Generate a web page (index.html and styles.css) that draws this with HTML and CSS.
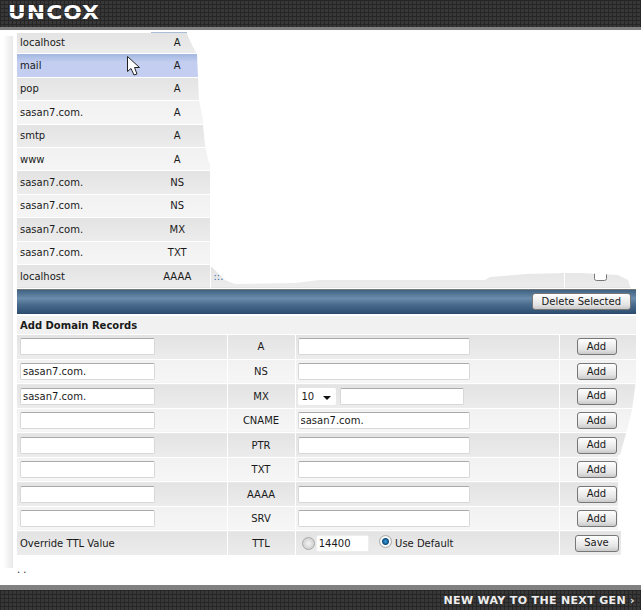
FILE: index.html

```html
<!DOCTYPE html>
<html lang="en">
<head>
  <meta charset="UTF-8" />
  <title>Uncox DNS Zone</title>
  <link rel="stylesheet" href="styles.css">
</head>
<body>
  <header class="top-bar">
    <span class="logo">UNCOX</span>
  </header>

  <main class="content">
    <table class="records">
      <tr class="shade"><td class="name">localhost</td><td class="type">A</td><td class="rest"></td><td class="check"></td></tr>
      <tr class="hover"><td class="name">mail</td><td class="type">A</td><td class="rest"></td><td class="check"></td></tr>
      <tr class="shade"><td class="name">pop</td><td class="type">A</td><td class="rest"></td><td class="check"></td></tr>
      <tr><td class="name">sasan7.com.</td><td class="type">A</td><td class="rest"></td><td class="check"></td></tr>
      <tr class="shade"><td class="name">smtp</td><td class="type">A</td><td class="rest"></td><td class="check"></td></tr>
      <tr><td class="name">www</td><td class="type">A</td><td class="rest"></td><td class="check"></td></tr>
      <tr class="shade"><td class="name">sasan7.com.</td><td class="type">NS</td><td class="rest"></td><td class="check"></td></tr>
      <tr><td class="name">sasan7.com.</td><td class="type">NS</td><td class="rest"></td><td class="check"></td></tr>
      <tr class="shade"><td class="name">sasan7.com.</td><td class="type">MX</td><td class="rest"></td><td class="check"></td></tr>
      <tr><td class="name">sasan7.com.</td><td class="type">TXT</td><td class="rest"></td><td class="check"></td></tr>
      <tr class="shade"><td class="name">localhost</td><td class="type">AAAA</td><td class="rest">::.</td><td class="check"><input type="checkbox"></td></tr>
    </table>

    <div class="action-bar">
      <button class="btn">Delete Selected</button>
    </div>

    <div class="add-title">Add Domain Records</div>
    <table class="add-form">
      <tr class="shade">
        <td class="c-host"><input class="field" type="text"></td>
        <td class="c-type">A</td>
        <td class="c-value"><input class="field wide" type="text"></td>
        <td class="c-btn"><button class="btn">Add</button></td>
      </tr>
      <tr>
        <td class="c-host"><input class="field" type="text" value="sasan7.com."></td>
        <td class="c-type">NS</td>
        <td class="c-value"><input class="field wide" type="text"></td>
        <td class="c-btn"><button class="btn">Add</button></td>
      </tr>
      <tr class="shade">
        <td class="c-host"><input class="field" type="text" value="sasan7.com."></td>
        <td class="c-type">MX</td>
        <td class="c-value">
          <span class="select">10<i class="arrow"></i></span>
          <input class="field prio" type="text">
        </td>
        <td class="c-btn"><button class="btn">Add</button></td>
      </tr>
      <tr>
        <td class="c-host"><input class="field" type="text"></td>
        <td class="c-type">CNAME</td>
        <td class="c-value"><input class="field wide" type="text" value="sasan7.com."></td>
        <td class="c-btn"><button class="btn">Add</button></td>
      </tr>
      <tr class="shade">
        <td class="c-host"><input class="field" type="text"></td>
        <td class="c-type">PTR</td>
        <td class="c-value"><input class="field wide" type="text"></td>
        <td class="c-btn"><button class="btn">Add</button></td>
      </tr>
      <tr>
        <td class="c-host"><input class="field" type="text"></td>
        <td class="c-type">TXT</td>
        <td class="c-value"><input class="field wide" type="text"></td>
        <td class="c-btn"><button class="btn">Add</button></td>
      </tr>
      <tr class="shade">
        <td class="c-host"><input class="field" type="text"></td>
        <td class="c-type">AAAA</td>
        <td class="c-value"><input class="field wide" type="text"></td>
        <td class="c-btn"><button class="btn">Add</button></td>
      </tr>
      <tr>
        <td class="c-host"><input class="field" type="text"></td>
        <td class="c-type">SRV</td>
        <td class="c-value"><input class="field wide" type="text"></td>
        <td class="c-btn"><button class="btn">Add</button></td>
      </tr>
      <tr class="shade">
        <td class="c-host">Override TTL Value</td>
        <td class="c-type">TTL</td>
        <td class="c-value ttl">
          <span class="radio"></span>
          <input class="field ttl-box" type="text" value="14400">
          <span class="radio on"></span>
          <span class="radio-label">Use Default</span>
        </td>
        <td class="c-btn"><button class="btn save">Save</button></td>
      </tr>
    </table>
    <div class="dots">. .</div>

    <!-- the page was cleaned up by hand, this is the white scrubbed area -->
    <svg class="scrub" width="641" height="555" viewBox="0 30 641 555">
      <polygon fill="#fff" points="187,30 641,30 641,557 621,557 621,531 618,531 618,455 620,455 627,430 632,410 636,380 636,313 641,313 641,285 636,289 631,289 628,280 618,275 580,273 565,273 527,274 490,277 485,280 320,280 295,283 235,284 225,280 212,267 210,267 210,165 208,160 207,155 205,145 203,125 203,120 201,110 199,100 198,78 197,54 192,45 187,34"/>
      <rect x="0" y="30" width="187" height="3" fill="#fff"/>
      <rect x="151" y="32" width="36" height="1" fill="#a9bdd6"/>
    </svg>
    <div class="edge"></div>

    <svg class="cursor" width="14" height="20" viewBox="0 0 14 20">
      <path d="M0.5 0.5V15.5L4 12.5L7 19L10 18L7.5 11.5H12.5Z" fill="#fff" stroke="#222" stroke-width="1"/>
    </svg>
  </main>

  <footer class="bottom-bar">
    <span class="slogan">NEW WAY TO THE NEXT GEN ›</span>
  </footer>
</body>
</html>
```

FILE: styles.css

```css
* {
  box-sizing: border-box;
}
html, body {
  margin: 0;
  height: 610px;
  overflow: hidden;
}
body {
  display: flex;
  flex-direction: column;
  background: #fff;
  color: #1a1a1a;
  font-family: "DejaVu Sans", Verdana, sans-serif;
  font-size: 10px;
}

/* dark bars */
.top-bar,
.bottom-bar {
  display: flex;
  align-items: center;
  background-color: #383838;
  background-image:
    linear-gradient(#262626 1px, transparent 1px),
    linear-gradient(90deg, #262626 1px, transparent 1px);
  background-size: 4px 4px;
}
.top-bar {
  height: 30px;
  padding: 0 0 3px 8px;
  border-bottom: 3px solid #808080;
}
.logo {
  position: relative;
  color: #fff;
  font-family: "DejaVu Sans", sans-serif;
  font-weight: bold;
  font-size: 20px;
  letter-spacing: 1px;
  transform: scaleX(1.09);
  transform-origin: left center;
}
.logo::after {
  content: "";
  position: absolute;
  left: 0;
  right: 0;
  top: 12px;
  height: 1px;
  background: #383838;
}
.bottom-bar {
  height: 25px;
  justify-content: flex-end;
  padding-right: 6px;
  border-top: 5px solid #808080;
}
.slogan {
  color: #eee;
  font-family: "DejaVu Sans", sans-serif;
  font-weight: bold;
  font-size: 11px;
  letter-spacing: 0.34px;
}

.content {
  position: relative;
  flex: 1;
  padding: 0 5px 0 17px;
}

/* existing records */
table {
  border-collapse: collapse;
  table-layout: fixed;
  width: 619px;
}
.records td {
  height: 23.4px;
  padding: 0;
  border-top: 1px solid #fff;
  vertical-align: middle;
}
.records tr {
  background: linear-gradient(#f1f1f1, #f5f5f5);
}
.records tr.shade {
  background: linear-gradient(#e3e3e3, #ececec);
}
.records tr.hover {
  background: linear-gradient(#a3b7e0, #c3cef0 35%);
}
.records .name {
  width: 128px;
  padding-left: 3px;
}
.records .type {
  width: 65px;
  text-align: center;
  border-right: 1px solid #fff;
}
.records .rest {
  color: #3a6ea5;
  padding-left: 3px;
  border-right: 1px solid #fff;
}
.records .check {
  width: 72px;
  text-align: center;
}
.records input {
  width: 13px;
  height: 13px;
  margin: 0 0 4px;
}

.action-bar {
  display: flex;
  justify-content: flex-end;
  align-items: center;
  height: 25px;
  margin-top: 1px;
  padding-right: 5px;
  border-top: 1px solid #777;
  background: linear-gradient(#3f6283, #6b8cab 35%, #4a6c8e 60%, #2b4c6d);
}

.btn {
  height: 17px;
  padding: 0 9px;
  border: 1px solid #777;
  border-radius: 3px;
  background: linear-gradient(#fff, #e4e4e4 70%, #c9c9c9);
  color: #1a1a1a;
  font-family: inherit;
  font-size: 10px;
  line-height: 14px;
}

/* add form */
.add-title {
  height: 19px;
  margin-top: 2px;
  padding: 4px 0 0 3px;
  font-weight: bold;
  background: #f1f1f1;
  border-bottom: 1px solid #fff;
}
.add-form td {
  height: 24.5px;
  padding: 0;
  border-bottom: 1px solid #fff;
  background: linear-gradient(#f1f1f1, #f6f6f6);
}
.add-form .shade td {
  background: linear-gradient(#e3e3e3, #ececec);
}
.add-form .c-host {
  width: 210px;
  padding-left: 3px;
  border-right: 1px solid #fff;
}
.add-form .c-type {
  width: 68px;
  text-align: center;
  border-right: 1px solid #fff;
}
.add-form .c-value {
  width: 264px;
  padding-left: 2px;
  border-right: 1px solid #fff;
}
.add-form .c-btn {
  padding-left: 17px;
}
.add-form .btn {
  width: 40px;
  padding: 0;
}
.add-form .btn.save {
  width: 44px;
  margin-left: -2px;
}
.field {
  width: 135px;
  height: 17px;
  padding: 0 2px;
  border: 1px solid #d8d8d8;
  border-top-color: #aaa;
  border-radius: 2px;
  background: #fff;
  color: #1a1a1a;
  font-family: inherit;
  font-size: 10px;
  vertical-align: middle;
}
.field.wide {
  width: 172px;
}
.field.prio {
  width: 124px;
  margin-left: 1px;
}
.select {
  display: inline-flex;
  align-items: center;
  justify-content: space-between;
  width: 38px;
  height: 17px;
  padding: 0 5px 0 4px;
  background: #fff;
  border-radius: 2px;
  vertical-align: middle;
}
.arrow {
  width: 0;
  height: 0;
  margin-top: 3px;
  border: 4px solid transparent;
  border-top-color: #111;
  border-bottom-width: 0;
}
.ttl {
  white-space: nowrap;
}
.field.ttl-box {
  width: 53px;
  margin: 0 7px 0 -2px;
  border-color: #eee;
}
.radio {
  display: inline-block;
  width: 13px;
  height: 13px;
  margin-left: 4px;
  border: 1px solid #aaa;
  border-radius: 50%;
  background: radial-gradient(circle, #f4f4f4, #c4c4c4);
  vertical-align: middle;
}
.radio.on {
  margin-left: 0;
  margin-bottom: 3px;
  background: radial-gradient(circle, #3f9fdd 0, #0d4f83 3px, #fff 4px, #d6d6d6 100%);
}
.radio-label {
  position: relative;
  top: 1px;
}
.dots {
  margin-top: 9px;
  line-height: 10px;
}

/* scrubbed out parts of the screenshot */
.scrub {
  position: absolute;
  left: 0;
  top: 0;
  pointer-events: none;
}
.edge {
  position: absolute;
  left: 3px;
  top: 6px;
  width: 10px;
  height: 532px;
  background: linear-gradient(90deg, #fff, #e8e8e8);
}
.cursor {
  position: absolute;
  left: 127px;
  top: 26px;
}
```
